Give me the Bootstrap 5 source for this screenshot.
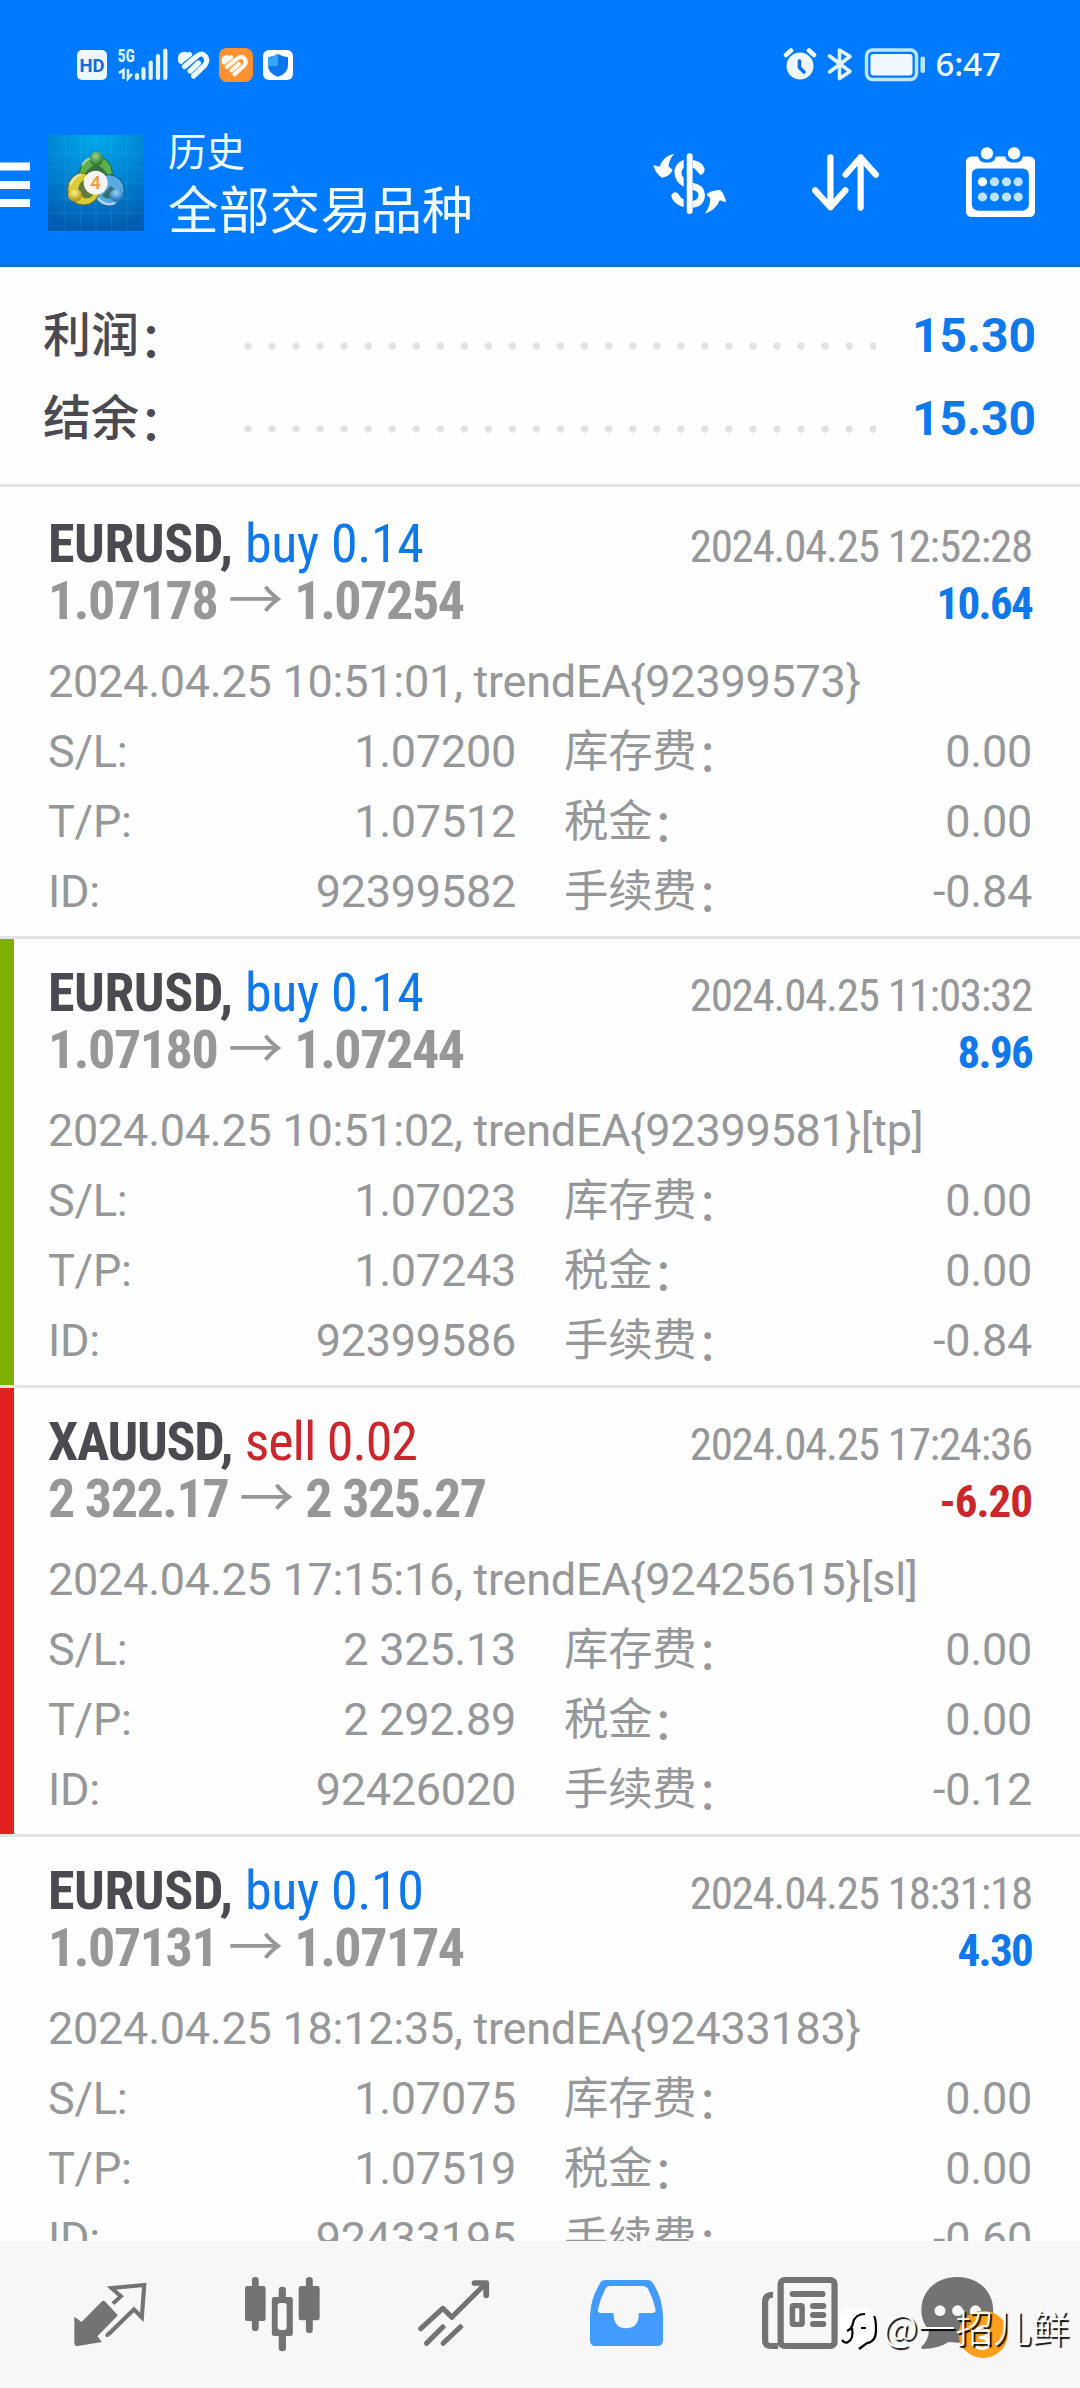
<!DOCTYPE html>
<html lang="zh-CN">
<head>
<meta charset="utf-8">
<meta name="viewport" content="width=device-width, initial-scale=1">
<title>历史</title>
<link rel="stylesheet" href="https://cdn.jsdelivr.net/npm/bootstrap@5.3.0/dist/css/bootstrap.min.css">
<style>
  body{font-family:Roboto,"Noto Sans CJK SC",sans-serif;color:#969799;background:#fefefe;height:2388px}
  svg{display:block;flex:none}
  .app-head{background:#007aff;height:267px;border-bottom:3px solid #176fc9;color:#f2fcff}
  .status{height:82px;padding:47px 79px 0 77px}
  .clock{font:500 33px/34px "Noto Sans",sans-serif;margin-left:10px}
  .tools{padding:45px 45px 0 0}
  .logo{margin:8px 24px 0 18px}
  .ico-cash{margin:24px 86px 0 0}
  .ico-sort{margin:27px 87px 0 0}
  .ico-cal{margin-top:20px}
  .sub-title{font-size:38.5px;line-height:48px;margin-top:2px}
  .main-title{font-size:50.8px;line-height:66px;margin-top:2px}
  .totals{height:220px;padding:27px 44px 0 43px;border-bottom:3px solid #e3e3e3}
  .total-line{height:83px;line-height:83px;font-size:48px}
  .total-line .lbl{width:201px;color:#4b4a50;font-weight:500}
  .total-line b{color:#0f78ea}
  .cl{vertical-align:-5px;line-height:1}
  .dots{width:632px;height:8px;margin-top:21px;background:radial-gradient(circle at 4px 4px,#e2e2e2 3.3px,transparent 4.1px) 0 0/24.05px 8px repeat-x}
  .deal{height:449px;padding:24px 48px 0;border-top:3px solid #e3e3e3}
  .deal:first-child{border-color:transparent}
  .deal.tp{box-shadow:inset 14px 0 #7fb000}
  .deal.sl{box-shadow:inset 14px 0 #e2201e}
  .deal-top{font-size:54px;line-height:59px;font-stretch:75%;height:59px;white-space:nowrap}
  .deal-top .stamp{font-size:45px;letter-spacing:-1.25px}
  .deal-prices{line-height:55px;letter-spacing:-1.45px}
  .deal-top b.pl{font-size:45px;letter-spacing:-1.7px}
  .sym{color:#4b4a50;letter-spacing:-.45px}
  .buy{color:#0f78ea;letter-spacing:-.4px}
  .sell{color:#c9272b}
  .deal.sl .sym{letter-spacing:-1.3px}
  .deal.sl .sell{letter-spacing:-1px}
  .arr{font-family:"Noto Sans CJK SC";font-weight:400;font-size:55px;font-stretch:100%;line-height:0;letter-spacing:0}
  .detail{font-size:45px;line-height:70px;height:70px;white-space:nowrap;letter-spacing:-.25px}
  .detail.first{margin-top:15px}
  .pair{gap:48px}
  .fee{font-size:44.4px}
  .tabs{height:147px;background:#f7f7f7;padding:0 24px}
  .tabs .tab{width:172px}
  .tabs .tab-news{padding-left:3px}
  .tabs .tab-chat{padding-right:11px}
  .mark-line{left:839px;top:2301px;color:#fff;font:300 38px/50px "Noto Sans CJK SC",sans-serif;text-shadow:2px 2px 1px #000;white-space:nowrap}
</style>
</head>
<body class="position-relative d-flex flex-column overflow-hidden m-0">

<header class="app-head flex-shrink-0">
  <div class="status d-flex align-items-start justify-content-between">
    <svg width="217" height="36" viewBox="77 47 217 36">
      <rect x="77" y="50" width="30" height="30" rx="5" fill="#edf7ff"/>
      <text x="92" y="71.5" font-family="Roboto" font-weight="700" font-size="18.5" text-anchor="middle" fill="#1769d2">HD</text>
      <text x="117.5" y="62" font-family="Roboto" font-weight="700" font-size="19" font-stretch="75%" textLength="17.5" lengthAdjust="spacingAndGlyphs" fill="#d9f4ff">5G</text>
      <path d="M119 73l4.5-3V79M128 69v9.500l4-4.500" fill="none" stroke="#d9f4ff" stroke-width="2.600"/>
      <path d="M137 75v3M143.500 69v9M150.700 62.500v15.500M158 56v22M165.300 50.500v27.500" stroke="#e3f6ff" stroke-width="4.200" stroke-linecap="round"/>
      <g fill="none" stroke="#eefaff" stroke-width="5.200" stroke-linecap="round" stroke-linejoin="round"><path d="M181 61L189.500 54.500M184.500 66.500L197 56Q202 52 205 56Q208.500 60 205 65L193.500 76M190 71L198.500 63"/><path d="M181 61Q179 54 185.500 54.500z" fill="#eefaff"/></g>
      <rect x="219" y="48" width="34" height="34" rx="8" fill="#ff9130"/>
      <g transform="translate(72 14.200) scale(.84 .79)" fill="none" stroke="#fff8ee" stroke-width="5.200" stroke-linecap="round" stroke-linejoin="round"><path d="M181 61L189.500 54.500M184.500 66.500L197 56Q202 52 205 56Q208.500 60 205 65L193.500 76M190 71L198.500 63"/><path d="M181 61Q179 54 185.500 54.500z" fill="#fff8ee"/></g>
      <rect x="263" y="50" width="30" height="30" rx="6" fill="#fafeff"/>
      <path d="M278 54q5 3 10 3.200v8q0 8-10 11.500q-10-3.500-10-11.500v-8q5-.2 10-3.200z" fill="#0b74ef"/>
      <path d="M278 54v12h-10v-8.800q5-.2 10-3.200z" fill="#35a5fb"/>
    </svg>
    <div class="d-flex">
      <svg width="142" height="36" viewBox="786 47 142 36">
        <circle cx="803" cy="66" r="13.500" fill="#edf8ff"/>
        <path d="M789 55l5-4.500M817 55l-5-4.500" stroke="#edf8ff" stroke-width="4.500" stroke-linecap="round"/>
        <path d="M802.500 61v6.500l4.500 4.500" fill="none" stroke="#0c71e0" stroke-width="3.600" stroke-linecap="round" stroke-linejoin="round"/>
        <path d="M832.500 56l20.500 15.500l-10.500 7V50l10.500 6.500l-20.500 15.500" fill="none" stroke="#e3f6ff" stroke-width="3.600" stroke-linecap="round" stroke-linejoin="round"/>
        <rect x="869.500" y="50" width="50" height="29.500" rx="6" fill="none" stroke="#bfe5ff" stroke-width="3.400"/>
        <rect x="873.500" y="54" width="42" height="21.500" rx="3" fill="#f1f7ff"/>
        <rect x="923.500" y="56.500" width="4.500" height="16.500" rx="2" fill="#bfe5ff"/>
      </svg>
      <div class="clock">6:47</div>
    </div>
  </div>

  <div class="tools d-flex align-items-start">
    <svg class="mt-1" width="30" height="90" viewBox="0 131 30 90"><path d="M0 166.500h30M0 185h30M0 203h30" stroke="#fff" stroke-width="8"/></svg>
    <svg class="logo" width="96" height="96" viewBox="24 30 288 288" role="img" aria-label="MetaTrader 4">
      <defs>
        <radialGradient id="lg" cx=".5" cy="0" r="1"><stop offset="0" stop-color="#00aaea"/><stop offset=".5" stop-color="#0086d4"/><stop offset="1" stop-color="#005cb0"/></radialGradient>
        <radialGradient id="gr" cx=".45" cy=".3" r=".7"><stop offset="0" stop-color="#9fd38a"/><stop offset="1" stop-color="#17702a"/></radialGradient>
        <radialGradient id="ye" cx=".45" cy=".3" r=".7"><stop offset="0" stop-color="#fff48a"/><stop offset="1" stop-color="#a98b0b"/></radialGradient>
        <radialGradient id="bl" cx=".45" cy=".3" r=".7"><stop offset="0" stop-color="#9cd6f8"/><stop offset="1" stop-color="#1567b0"/></radialGradient>
      </defs>
      <rect x="24" y="30" width="288" height="288" fill="url(#lg)"/>
      <path d="M24 82H312M24 128H312M24 174H312M24 220H312M24 264H312M76 30V318M122 30V318M168 30V318M214 30V318M260 30V318" stroke="#4bc0f2" stroke-opacity=".3" stroke-width="2"/>
      <g stroke-width="3">
        <circle cx="168" cy="143" r="49" fill="#5db04c" stroke="#1b6a2c"/>
        <circle cx="206" cy="196" r="47" fill="#58abe2" stroke="#12508c"/>
        <circle cx="131" cy="192" r="48" fill="#dccb38" stroke="#6e6a10"/>
      </g>
      <path d="M128 118q14-22 40-20M92 178q8-24 30-30M176 222q20 22 46 14" fill="none" stroke="#fff" stroke-opacity=".55" stroke-width="7" stroke-linecap="round"/>
      <path d="M134 150q12-28 34-28t34 28zM116 206q-6-26 14-40l30 44q-20 22-44-4zM186 212l26-30q22 14 10 34q-20 12-36-4z" fill="#23503a" fill-opacity=".65"/>
      <ellipse cx="169" cy="102" rx="20" ry="22" fill="url(#gr)"/>
      <ellipse cx="105" cy="211" rx="21" ry="19" fill="url(#ye)"/>
      <ellipse cx="230" cy="211" rx="21" ry="19" fill="url(#bl)"/>
      <circle cx="167" cy="173" r="36" fill="#f8f4f0"/>
      <text x="167" y="193" font-family="Roboto" font-weight="500" font-size="56" text-anchor="middle" fill="#f09a45">4</text>
    </svg>
    <div class="flex-grow-1">
      <div class="sub-title">历史</div>
      <div class="main-title">全部交易品种</div>
    </div>
    <svg class="ico-cash" width="73" height="64" viewBox="329 361 212 192" preserveAspectRatio="none" fill="#fff">
      <path d="M391 369q-14 14-17 38l12 11q-8 20-31 23q-20-14-25-38l18 5q12-34 43-39z"/>
      <path d="M480 549q16-24 15-46l-11-12q8-10 40-14q14 16 17 38l-18-6q-12 30-43 40z"/>
      <path d="M418 387q-26 12-27 36q2 32 27 45V440q-7-5-6-17q1-8 6-12zM418 530q-30-10-36-34q2-11 13-11q6 0 10 9q4 8 13 12zM444 388q27 3 35 26q0 16-13 18q-8-8-12-14q-4-6-10-7zM444 456q34 5 36 37q-2 36-36 38v-20q17-3 17-18q0-12-17-15z"/>
      <rect x="427" y="368" width="17" height="182" rx="8"/>
    </svg>
    <svg class="ico-sort" width="67" height="57" viewBox="792 376 193 166" preserveAspectRatio="none" fill="none" stroke="#fff" stroke-width="18" stroke-linecap="round" stroke-linejoin="round"><path d="M845 386V531M801 482L845 531L888 482M932 532V386M889 436L932 386L976 436"/></svg>
    <svg class="ico-cal" width="69" height="70" viewBox="1237 350 201 209" preserveAspectRatio="none">
      <rect x="1237" y="378" width="201" height="181" rx="16" fill="#fff"/>
      <rect x="1254" y="414" width="166" height="126" rx="18" fill="#007aff"/>
      <g fill="#007aff"><rect x="1272" y="350" width="52" height="46" rx="20"/><rect x="1351" y="350" width="52" height="46" rx="20"/></g>
      <circle cx="1298" cy="369" r="18" fill="#fff"/><circle cx="1377" cy="369" r="18" fill="#fff"/>
      <g fill="#bfe2ff"><circle cx="1285" cy="454" r="13.500" fill="#fff"/><circle cx="1320" cy="454" r="13.500"/><circle cx="1355" cy="454" r="13.500"/><circle cx="1389" cy="454" r="13.500"/><circle cx="1285" cy="499" r="13.500"/><circle cx="1320" cy="499" r="13.500"/><circle cx="1355" cy="499" r="13.500"/><circle cx="1389" cy="499" r="13.500"/></g>
    </svg>
  </div>
</header>

<section class="totals flex-shrink-0">
  <div class="total-line d-flex align-items-center"><span class="lbl">利润<span class="cl">：</span></span><span class="dots"></span><b class="ms-auto">15.30</b></div>
  <div class="total-line d-flex align-items-center"><span class="lbl">结余<span class="cl">：</span></span><span class="dots"></span><b class="ms-auto">15.30</b></div>
</section>

<main class="flex-grow-1 overflow-hidden" style="min-height:0">
  <article class="deal">
    <div class="deal-top d-flex justify-content-between align-items-baseline"><span><b class="sym">EURUSD,</b> <span class="buy">buy 0.14</span></span><span class="stamp">2024.04.25 12:52:28</span></div>
    <div class="deal-top deal-prices d-flex justify-content-between align-items-baseline"><b>1.07178 <span class="arr">→</span> 1.07254</b><b class="pl buy">10.64</b></div>
    <div class="detail first">2024.04.25 10:51:01, trendEA{92399573}</div>
    <div class="detail pair d-flex"><div class="w-50 d-flex justify-content-between"><span>S/L:</span><span>1.07200</span></div><div class="w-50 d-flex justify-content-between"><span class="fee">库存费<span class="cl">：</span></span><span>0.00</span></div></div>
    <div class="detail pair d-flex"><div class="w-50 d-flex justify-content-between"><span>T/P:</span><span>1.07512</span></div><div class="w-50 d-flex justify-content-between"><span class="fee">税金<span class="cl">：</span></span><span>0.00</span></div></div>
    <div class="detail pair d-flex"><div class="w-50 d-flex justify-content-between"><span>ID:</span><span>92399582</span></div><div class="w-50 d-flex justify-content-between"><span class="fee">手续费<span class="cl">：</span></span><span>-0.84</span></div></div>
  </article>
  <article class="deal tp">
    <div class="deal-top d-flex justify-content-between align-items-baseline"><span><b class="sym">EURUSD,</b> <span class="buy">buy 0.14</span></span><span class="stamp">2024.04.25 11:03:32</span></div>
    <div class="deal-top deal-prices d-flex justify-content-between align-items-baseline"><b>1.07180 <span class="arr">→</span> 1.07244</b><b class="pl buy">8.96</b></div>
    <div class="detail first">2024.04.25 10:51:02, trendEA{92399581}[tp]</div>
    <div class="detail pair d-flex"><div class="w-50 d-flex justify-content-between"><span>S/L:</span><span>1.07023</span></div><div class="w-50 d-flex justify-content-between"><span class="fee">库存费<span class="cl">：</span></span><span>0.00</span></div></div>
    <div class="detail pair d-flex"><div class="w-50 d-flex justify-content-between"><span>T/P:</span><span>1.07243</span></div><div class="w-50 d-flex justify-content-between"><span class="fee">税金<span class="cl">：</span></span><span>0.00</span></div></div>
    <div class="detail pair d-flex"><div class="w-50 d-flex justify-content-between"><span>ID:</span><span>92399586</span></div><div class="w-50 d-flex justify-content-between"><span class="fee">手续费<span class="cl">：</span></span><span>-0.84</span></div></div>
  </article>
  <article class="deal sl">
    <div class="deal-top d-flex justify-content-between align-items-baseline"><span><b class="sym">XAUUSD,</b> <span class="sell">sell 0.02</span></span><span class="stamp">2024.04.25 17:24:36</span></div>
    <div class="deal-top deal-prices d-flex justify-content-between align-items-baseline"><b>2 322.17 <span class="arr">→</span> 2 325.27</b><b class="pl sell">-6.20</b></div>
    <div class="detail first">2024.04.25 17:15:16, trendEA{92425615}[sl]</div>
    <div class="detail pair d-flex"><div class="w-50 d-flex justify-content-between"><span>S/L:</span><span>2 325.13</span></div><div class="w-50 d-flex justify-content-between"><span class="fee">库存费<span class="cl">：</span></span><span>0.00</span></div></div>
    <div class="detail pair d-flex"><div class="w-50 d-flex justify-content-between"><span>T/P:</span><span>2 292.89</span></div><div class="w-50 d-flex justify-content-between"><span class="fee">税金<span class="cl">：</span></span><span>0.00</span></div></div>
    <div class="detail pair d-flex"><div class="w-50 d-flex justify-content-between"><span>ID:</span><span>92426020</span></div><div class="w-50 d-flex justify-content-between"><span class="fee">手续费<span class="cl">：</span></span><span>-0.12</span></div></div>
  </article>
  <article class="deal">
    <div class="deal-top d-flex justify-content-between align-items-baseline"><span><b class="sym">EURUSD,</b> <span class="buy">buy 0.10</span></span><span class="stamp">2024.04.25 18:31:18</span></div>
    <div class="deal-top deal-prices d-flex justify-content-between align-items-baseline"><b>1.07131 <span class="arr">→</span> 1.07174</b><b class="pl buy">4.30</b></div>
    <div class="detail first">2024.04.25 18:12:35, trendEA{92433183}</div>
    <div class="detail pair d-flex"><div class="w-50 d-flex justify-content-between"><span>S/L:</span><span>1.07075</span></div><div class="w-50 d-flex justify-content-between"><span class="fee">库存费<span class="cl">：</span></span><span>0.00</span></div></div>
    <div class="detail pair d-flex"><div class="w-50 d-flex justify-content-between"><span>T/P:</span><span>1.07519</span></div><div class="w-50 d-flex justify-content-between"><span class="fee">税金<span class="cl">：</span></span><span>0.00</span></div></div>
    <div class="detail pair d-flex"><div class="w-50 d-flex justify-content-between"><span>ID:</span><span>92433195</span></div><div class="w-50 d-flex justify-content-between"><span class="fee">手续费<span class="cl">：</span></span><span>-0.60</span></div></div>
  </article>
</main>

<nav class="tabs d-flex flex-shrink-0">
  <div class="tab d-flex justify-content-center"><svg width="73" height="147" viewBox="214 63 212 441" preserveAspectRatio="none" fill="none" stroke="#737373" stroke-width="12">
    <path d="M327 251L350 229L323 204L418 195L411 292L388 268L315 342" stroke-linejoin="miter"/><path d="M315 341l-4 4" stroke-linecap="round"/>
    <path d="M300 242q3 0 5 3l33 37q4 3 1 7l-57 60l13 17l-70 12q-10 0-10-10V290l21 16l58-61q3-3 6-3z" fill="#737373" stroke="none"/>
  </svg></div>
  <div class="tab d-flex justify-content-center"><svg width="75" height="147" viewBox="709 63 218 441" preserveAspectRatio="none" fill="#737373">
    <rect x="729" y="171" width="20" height="162" rx="10"/><rect x="709" y="198" width="60" height="105" rx="7"/>
    <rect x="886" y="171" width="20" height="168" rx="10"/><rect x="865" y="198" width="61" height="103" rx="7"/>
    <rect x="807" y="200" width="21" height="194" rx="10"/><rect x="787" y="231" width="61" height="117" rx="7"/><rect x="804" y="249" width="26" height="81" rx="8" fill="#f7f7f7"/>
  </svg></div>
  <div class="tab d-flex justify-content-center"><svg width="72" height="147" viewBox="1213 63 209 441" preserveAspectRatio="none" fill="none" stroke="#737373" stroke-width="15" stroke-linecap="round" stroke-linejoin="round">
    <path d="M1221 326L1285 265L1311 292L1410 190"/><path d="M1377 189H1411V226" stroke-width="17"/><path d="M1238 370L1285 321M1286 370L1336 321"/><path d="M1283 312l11 11M1335 311l11 11" stroke-width="2"/>
  </svg></div>
  <div class="tab d-flex justify-content-center"><svg width="73" height="147" viewBox="146 63 211 441" preserveAspectRatio="none">
    <path d="M190 180H312Q322 180 328 190Q354 230 357 285V362Q356 378 340 378H162Q147 378 146 362V285Q148 235 175 190Q180 180 190 180z" fill="#429bff"/>
    <path d="M205 198H300Q310 199 314 207Q328 235 335 266Q338 279 326 279H287Q288 325 250 325Q214 325 214 279H178Q166 279 169 268Q176 235 190 207Q194 198 205 198z" fill="#f7f7f7"/>
  </svg></div>
  <div class="tab tab-news d-flex justify-content-center"><svg width="76" height="147" viewBox="645 63 220 441" preserveAspectRatio="none" fill="none" stroke="#737373">
    <path d="M677 224Q654 224 654 246V362Q654 378 672 378H690" stroke-width="18"/><rect x="699" y="180" width="156" height="198" rx="12" stroke-width="18"/><path d="M672 370H692V386H672z" fill="#737373" stroke="none"/>
    <path d="M734 222H820M793 258H822M793 285H822M793 312H822" stroke-width="18" stroke-linecap="round"/>
    <rect x="733" y="257" width="28" height="56" rx="3" stroke-width="16"/>
  </svg></div>
  <div class="tab tab-chat d-flex justify-content-center"><svg width="87" height="147" viewBox="1108 63 252 441" preserveAspectRatio="none">
    <path d="M1213 171C1275 171 1317 215 1317 270C1317 330 1275 368 1213 368Q1200 367 1188 366Q1160 386 1112 387Q1106 384 1112 377Q1130 360 1131 330Q1109 305 1109 270C1109 215 1150 171 1213 171z" fill="#737373"/>
    <g fill="#f7f7f7"><circle cx="1163" cy="272" r="16"/><circle cx="1214" cy="272" r="16"/><circle cx="1266" cy="272" r="16"/></g>
    <ellipse cx="1288" cy="343" rx="71" ry="71" fill="#ff9f1c"/>
    <text x="1286" y="389" font-family="Roboto" font-size="98" font-weight="500" text-anchor="middle" fill="#fff">3</text>
  </svg></div>
</nav>

<div class="mark-line position-absolute d-flex">
  <svg width="44" height="50" viewBox="839 2301 44 50"><path d="M850 2308h16q10 0 10 10v13q0 10-8 12l-7 6v-5h-11q-10-1-10-11v-15q0-10 10-10z" fill="#fff"/><path d="M842 2340q3 4 6 2q6-3 4-14M847 2331q5-2 6-8q2-9 12-9M861 2328h5M874 2316q2 3 2 14q0 12-9 13l-8 6" fill="none" stroke="#000" stroke-width="2.200"/></svg>
  <span>@一招儿鲜</span>
</div>

<script src="https://cdn.jsdelivr.net/npm/bootstrap@5.3.0/dist/js/bootstrap.bundle.min.js"></script>
</body>
</html>
